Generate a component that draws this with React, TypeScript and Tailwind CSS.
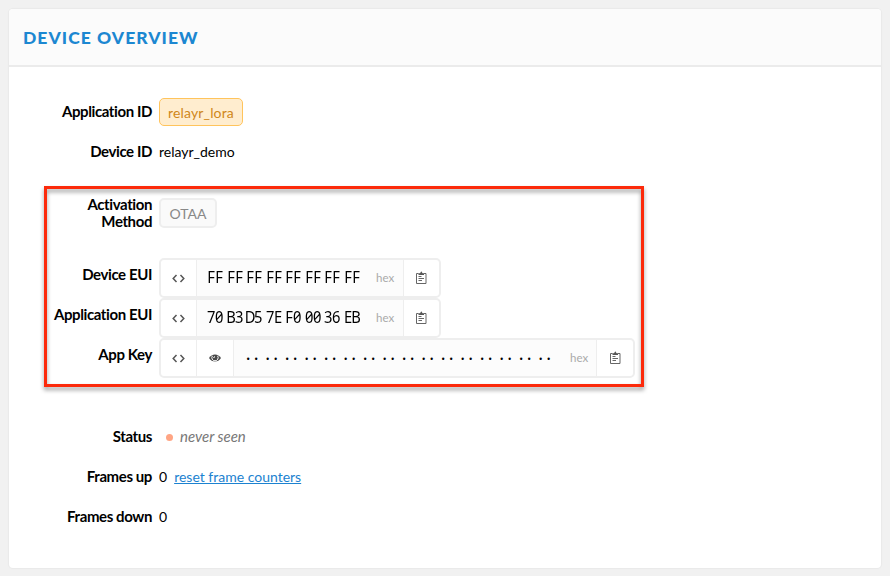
import React from "react";

const ui = "font-['Lato',sans-serif]";

function Row({ label, className, labelClass = "", children }: { label: React.ReactNode; className: string; labelClass?: string; children: React.ReactNode }) {
  return (
    <div className={`flex gap-[7px] ${className}`}>
      <div className={`w-[112px] shrink-0 text-right text-[15px] leading-[17px] font-bold tracking-[-0.400px] text-black ${labelClass}`}>{label}</div>
      {children}
    </div>
  );
}

function CodeIcon() {
  return (
    <svg width="13" height="9" viewBox="0 0 13 9" fill="none" stroke="#555" strokeWidth="1.5">
      <path d="M4.5 1 1.2 4.5 4.5 8M8.5 1l3.3 3.5L8.500 8" />
    </svg>
  );
}

function EyeIcon() {
  return (
    <svg width="12" height="8" viewBox="0 0 12 8">
      <path d="M0 4C2.800-.8 9.200-.8 12 4 9.200 8.800 2.800 8.800 0 4Z" fill="#4a4a4a" />
      <path d="M3.400 1.900A3.100 3.100 0 0 0 6 6.800 3.100 3.100 0 0 0 8.600 1.900" stroke="#fff" strokeWidth="1" fill="none" />
      <path d="M4.700 4A1.300 1.300 0 0 1 6 2.700" stroke="#fff" strokeWidth="1" fill="none" />
    </svg>
  );
}

function ClipboardIcon() {
  return (
    <svg width="11" height="13" viewBox="0 0 11 13" fill="none" stroke="#666" className="mb-px">
      <path d="M2.500 2.500h-2v10h9.500v-10h-2" />
      <path d="M2.500 4V2.200h1.500L5.300.2l1.300 2H8V4Z" fill="#555" stroke="none" />
      <path d="M2.500 5.500h3M2.500 7.500h5.500M2.500 9.500h3.500" />
    </svg>
  );
}

function Cell({ children, className = "" }: { children: React.ReactNode; className?: string }) {
  return <div className={`flex shrink-0 items-center justify-center ${className}`}>{children}</div>;
}

function HexField({ bytes, hidden = false }: { bytes: string[]; hidden?: boolean }) {
  return (
    <div className={`flex h-10 rounded-[5px] border-2 border-[#eee] bg-white ${hidden ? "w-[476px]" : "w-[282px]"}`}>
      <Cell className="w-9 border-r border-[#eee]"><CodeIcon /></Cell>
      {hidden && <Cell className="w-[37px] border-r border-[#eee]"><EyeIcon /></Cell>}
      <div className={`flex grow items-center bg-[#fcfcfc] pl-[10px] text-black ${hidden ? "pt-px text-[18px]" : "pb-[2px] text-[16px]"}`}>
        {bytes.map((b, i) => (
          <span key={i} className="flex w-[19.500px] shrink-0 font-['Noto_Sans',sans-serif] [font-feature-settings:'zero']">
            {b.split("").map((c, j) => (
              <span key={j} className={`flex w-[8.200px] justify-center ${hidden ? "" : "scale-x-[0.92]"}`}>{c}</span>
            ))}
          </span>
        ))}
      </div>
      <Cell className={`justify-start bg-[#fcfcfc] text-[11.500px] text-[#aaa] ${hidden ? "w-[35px] pl-[9px]" : "w-[36px] pl-[9px]"}`}>hex</Cell>
      <Cell className={`border-l border-[#eee] ${hidden ? "w-[37px]" : "w-[36px]"}`}><ClipboardIcon /></Cell>
    </div>
  );
}

export default function App() {
  return (
    <div className={`h-[576px] w-[890px] bg-[#f1f1f1] px-[9px] pt-[9px] ${ui}`}>
      <div className="relative h-[559px] w-[872px] rounded-[4px] bg-white shadow-[0_0_1px_1px_#e9e9e9]">
        <header className="flex h-[58px] items-center rounded-t-[4px] border-b-2 border-[#ebebeb] bg-[#fbfbfb] pt-[2px] pl-[14px]">
          <h1 className="text-[17.500px] font-black tracking-[1.050px] text-[#1c87d1]">DEVICE OVERVIEW</h1>
        </header>
        <div className="flex flex-col pt-[25px] pl-[31px]">
          <Row label="Application ID" className="h-10 items-center" labelClass="pb-[2px]">
            <span className="flex h-[28px] w-[84px] items-center justify-center rounded-[5px] border border-[#ffc45c] bg-[#ffedcf] text-[14px] tracking-[0.150px] text-[#d08719]">relayr_lora</span>
          </Row>
          <Row label="Device ID" className="h-10 items-center pb-[2px]">
            <span className="text-[14px] text-black">relayr_demo</span>
          </Row>
          <Row label={<>Activation<br />Method</>} className="mt-[24px] h-[62px]">
            <span className="mt-[2px] flex h-[30px] w-[58px] items-center justify-center rounded-[5px] border-2 border-[#eee] bg-[#fafafa] text-[14px] text-[#888]">OTAA</span>
          </Row>
          <Row label="Device EUI" className="h-10" labelClass="pt-[8px]">
            <HexField bytes={["FF", "FF", "FF", "FF", "FF", "FF", "FF", "FF"]} />
          </Row>
          <Row label="Application EUI" className="h-10" labelClass="pt-[8px]">
            <HexField bytes={["70", "B3", "D5", "7E", "F0", "00", "36", "EB"]} />
          </Row>
          <Row label="App Key" className="h-10" labelClass="pt-[8px]">
            <HexField hidden bytes={Array(16).fill("··")} />
          </Row>
          <Row label="Status" className="mt-[39px] h-10 items-center pb-[2px]">
            <span className="mt-[2px] ml-[7px] size-[7px] rounded-full bg-[#ffa584]" />
            <em className="text-[15px] text-[#777]">never seen</em>
          </Row>
          <Row label="Frames up" className="h-10 items-center pb-[2px]">
            <span className="text-[14px] text-black">0</span>
            <a className="text-[14px] text-[#1c82d0] underline">reset frame counters</a>
          </Row>
          <Row label="Frames down" className="h-10 items-center pb-[2px]">
            <span className="text-[14px] text-black">0</span>
          </Row>
        </div>
        <div className="pointer-events-none absolute top-[177px] left-[35px] h-[201px] w-[600px] border-3 border-[#fc2a0b] drop-shadow-[0_3px_2px_rgba(0,0,0,0.4)]" />
      </div>
    </div>
  );
}
